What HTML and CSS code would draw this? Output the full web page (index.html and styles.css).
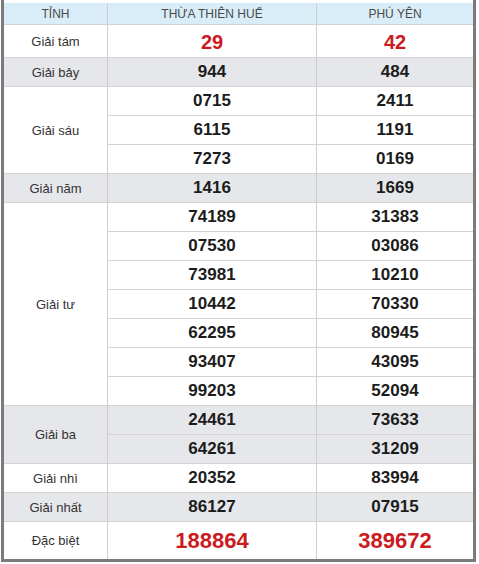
FILE: index.html
```html
<!DOCTYPE html>
<html lang="vi">
<head>
<meta charset="utf-8">
<title>Kết quả xổ số</title>
<link rel="stylesheet" href="styles.css">
</head>
<body>
<div class="frame">
  <div class="kq">
    <div class="c head">TỈNH</div>
    <div class="c head">THỪA THIÊN HUẾ</div>
    <div class="c head last">PHÚ YÊN</div>

    <div class="c lbl">Giải tám</div>
    <div class="c num red">29</div>
    <div class="c num red last">42</div>

    <div class="c lbl alt">Giải bảy</div>
    <div class="c num alt">944</div>
    <div class="c num alt last">484</div>

    <div class="c lbl span3">Giải sáu</div>
    <div class="c num">0715</div>
    <div class="c num last">2411</div>
    <div class="c num">6115</div>
    <div class="c num last">1191</div>
    <div class="c num">7273</div>
    <div class="c num last">0169</div>

    <div class="c lbl alt">Giải năm</div>
    <div class="c num alt">1416</div>
    <div class="c num alt last">1669</div>

    <div class="c lbl span7">Giải tư</div>
    <div class="c num">74189</div>
    <div class="c num last">31383</div>
    <div class="c num">07530</div>
    <div class="c num last">03086</div>
    <div class="c num">73981</div>
    <div class="c num last">10210</div>
    <div class="c num">10442</div>
    <div class="c num last">70330</div>
    <div class="c num">62295</div>
    <div class="c num last">80945</div>
    <div class="c num">93407</div>
    <div class="c num last">43095</div>
    <div class="c num">99203</div>
    <div class="c num last">52094</div>

    <div class="c lbl alt span2">Giải ba</div>
    <div class="c num alt">24461</div>
    <div class="c num alt last">73633</div>
    <div class="c num alt">64261</div>
    <div class="c num alt last">31209</div>

    <div class="c lbl">Giải nhì</div>
    <div class="c num">20352</div>
    <div class="c num last">83994</div>

    <div class="c lbl alt">Giải nhất</div>
    <div class="c num alt">86127</div>
    <div class="c num alt last">07915</div>

    <div class="c lbl bottom">Đặc biệt</div>
    <div class="c num db bottom">188864</div>
    <div class="c num db bottom last">389672</div>
  </div>
</div>
</body>
</html>
```

FILE: styles.css
```css
html, body {
  margin: 0;
  padding: 0;
  background: #ffffff;
}

.frame {
  width: 469px;
  margin-left: 1px;
  padding-top: 3px;
  border-left: 3px solid #7b7b7b;
  border-right: 3px solid #7b7b7b;
  border-bottom: 3px solid #7b7b7b;
  background: #ffffff;
}

.kq {
  display: grid;
  grid-template-columns: 104px 209px 156px;
  grid-template-rows: 22px 33px repeat(16, 29px) 37px;
  font-family: Arial, "Liberation Sans", sans-serif;
}

.c {
  box-sizing: border-box;
  display: flex;
  align-items: center;
  justify-content: center;
  border-right: 1px solid #cdcdcd;
  border-bottom: 1px solid #d3d3d3;
  background: #ffffff;
}

.c.last {
  border-right: none;
}

.c.bottom {
  border-bottom: none;
}

.head {
  background: #d9edf8;
  color: #4a4a4a;
  font-size: 12px;
  padding-top: 1px;
}

.lbl {
  color: #333333;
  font-size: 13px;
}

.num {
  color: #1c1c1c;
  font-size: 17px;
  font-weight: bold;
}

.alt {
  background: #e6e7eb;
}

.red {
  color: #cc1a1f;
  font-size: 20px;
  padding-top: 2px;
}

.db {
  color: #cc1a1f;
  font-size: 22px;
}

.span2 { grid-row: span 2; }
.span3 { grid-row: span 3; }
.span7 { grid-row: span 7; }
```
